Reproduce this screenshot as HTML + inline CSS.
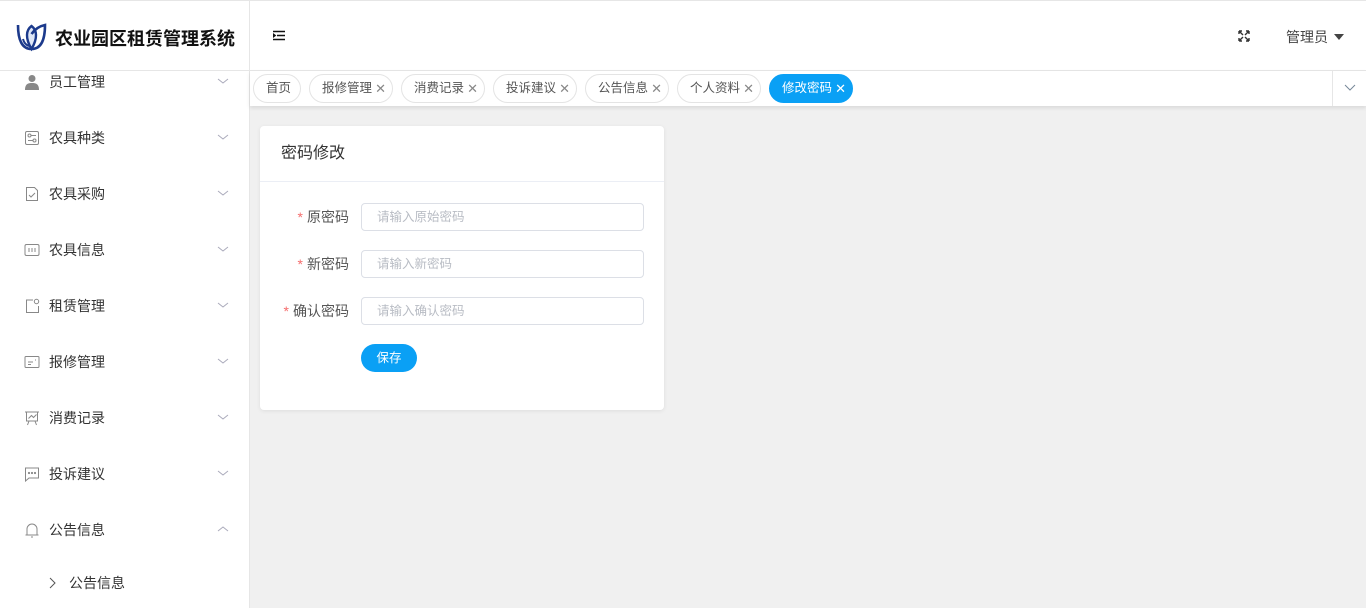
<!DOCTYPE html>
<html><head><meta charset="utf-8"><style>
*{margin:0;padding:0;box-sizing:border-box}
body{width:1366px;height:608px;overflow:hidden;background:#f0f0f0;font-family:"Liberation Sans","Noto Sans CJK SC",sans-serif;position:relative;color:#333}
.side{position:absolute;left:0;top:0;width:250px;height:608px;background:#fff;border-right:1px solid #e6e6e6}
.logo{position:absolute;left:0;top:0;width:249px;height:71px;border-bottom:1px solid #e6e6e6;border-top:1px solid #e6e6e6}
.logo span{position:absolute;left:55px;top:24px;font-size:18px;font-weight:bold;color:#111}
.mi{position:absolute;left:0;width:249px;height:20px;font-size:14px;color:#333}
.mi .ic{position:absolute;left:24px;top:2px;width:16px;height:16px}
.mi .t{position:absolute;left:49px;top:0;line-height:20px}
.mi .ch{position:absolute;left:217px;top:3px;width:12px;height:12px}
.hdr{position:absolute;left:250px;top:0;width:1116px;height:71px;background:#fff;border-bottom:1px solid #e6e6e6;border-top:1px solid #e6e6e6}
.tags{position:absolute;left:250px;top:71px;width:1116px;height:35px;background:#fff;box-shadow:0 2px 4px rgba(0,0,0,.1)}
.tag{position:absolute;top:3px;height:29px;border:1px solid #e4e4e4;border-radius:15px;font-size:12.5px;color:#555;line-height:27px;padding-left:12px}
.tag i{font-style:normal;position:absolute;right:6px;top:0;color:#888;font-size:13px}
.tag.on{background:#0aa0f5;border-color:#0aa0f5;color:#fff}
.tag.on i{color:#fff}
.card{position:absolute;left:260px;top:126px;width:404px;height:284px;background:#fff;border-radius:4px;box-shadow:0 1px 4px rgba(0,0,0,.08)}
.card h3{font-weight:normal;font-size:16px;color:#333;height:56px;line-height:55px;padding-left:21px;border-bottom:1px solid #ebeef5}
.lbl{position:absolute;right:315px;font-size:14px;color:#555;line-height:28px}
.lbl b{color:#f56c6c;font-weight:normal;margin-right:4px}
.inp{position:absolute;left:101px;width:283px;height:28px;border:1px solid #dcdfe6;border-radius:4px;font-size:12.5px;color:#b8bcc4;line-height:26px;padding-left:15px}
.btn{position:absolute;left:101px;top:218px;width:56px;height:28px;border-radius:14px;background:#0aa0f5;color:#fff;font-size:12.5px;line-height:28px;text-align:center}
</style></head><body>
<div class="side">
 <div class="logo">
  <svg style="position:absolute;left:16px;top:21px" width="31" height="30" viewBox="0 0 31 30"><path d="M15.5 4 C10 8 9 16 15.5 27 C22 16 21 8 15.5 4Z" fill="#dfe7f7" stroke="#1c3a8c" stroke-width="2.4"/><path d="M2 3 C2 18 6 27 15.5 27 C25 27 29 18 29 3 C24 4 19 7 15.5 12" fill="none" stroke="#1c3a8c" stroke-width="2.6"/><path d="M7 17 C8 21 10 23 13 24" fill="none" stroke="#1c3a8c" stroke-width="2"/></svg>
  <span>农业园区租赁管理系统</span>
 </div>
 <div class="mi" style="top:72px"><svg class="ic" viewBox="0 0 16 16"><circle cx="8" cy="4.5" r="3.5" fill="#888"/><path d="M1 16 C1 10 4 9 8 9 C12 9 15 10 15 16Z" fill="#888"/></svg><span class="t">员工管理</span><svg class="ch" viewBox="0 0 12 12"><path d="M1 4 L6 8 L11 4" fill="none" stroke="#aab" stroke-width="1"/></svg></div>
 <div class="mi" style="top:128px"><svg class="ic" viewBox="0 0 16 16" fill="none" stroke="#888"><rect x="1.5" y="1.5" width="13" height="13" rx="1.5"/><circle cx="5.5" cy="5.5" r="1.5"/><path d="M7 5.5h5M4 10.5h5"/><circle cx="10.5" cy="10.5" r="1.5"/></svg><span class="t">农具种类</span><svg class="ch" viewBox="0 0 12 12"><path d="M1 4 L6 8 L11 4" fill="none" stroke="#aab" stroke-width="1"/></svg></div>
 <div class="mi" style="top:184px"><svg class="ic" viewBox="0 0 16 16" fill="none" stroke="#888"><path d="M2.5 1.5h8l3 3v10h-11z"/><path d="M5 9l2 2 4-4"/></svg><span class="t">农具采购</span><svg class="ch" viewBox="0 0 12 12"><path d="M1 4 L6 8 L11 4" fill="none" stroke="#aab" stroke-width="1"/></svg></div>
 <div class="mi" style="top:240px"><svg class="ic" viewBox="0 0 16 16" fill="none" stroke="#888"><rect x="1" y="2.5" width="14" height="11" rx="1.5"/><path d="M5 6v4M8 6v4M11 6v4"/></svg><span class="t">农具信息</span><svg class="ch" viewBox="0 0 12 12"><path d="M1 4 L6 8 L11 4" fill="none" stroke="#aab" stroke-width="1"/></svg></div>
 <div class="mi" style="top:296px"><svg class="ic" viewBox="0 0 16 16" fill="none" stroke="#888"><path d="M9 2H2.5v12.5h12V8"/><circle cx="12.5" cy="3.5" r="2.2"/></svg><span class="t">租赁管理</span><svg class="ch" viewBox="0 0 12 12"><path d="M1 4 L6 8 L11 4" fill="none" stroke="#aab" stroke-width="1"/></svg></div>
 <div class="mi" style="top:352px"><svg class="ic" viewBox="0 0 16 16" fill="none" stroke="#888"><rect x="1" y="2.5" width="14" height="11" rx="1"/><path d="M4 8h5M4 10.5h3M11 6h1"/></svg><span class="t">报修管理</span><svg class="ch" viewBox="0 0 12 12"><path d="M1 4 L6 8 L11 4" fill="none" stroke="#aab" stroke-width="1"/></svg></div>
 <div class="mi" style="top:408px"><svg class="ic" viewBox="0 0 16 16" fill="none" stroke="#888"><path d="M1 2h14M2.5 2v9h11V2M5 11l-1.5 4M11 11l1.5 4M4.5 8.5l3-3 2 2 3-3"/></svg><span class="t">消费记录</span><svg class="ch" viewBox="0 0 12 12"><path d="M1 4 L6 8 L11 4" fill="none" stroke="#aab" stroke-width="1"/></svg></div>
 <div class="mi" style="top:464px"><svg class="ic" viewBox="0 0 16 16" fill="none" stroke="#888"><path d="M1.5 2h13v10H5l-3.5 3z"/><circle cx="5" cy="7" r=".6" fill="#888"/><circle cx="8" cy="7" r=".6" fill="#888"/><circle cx="11" cy="7" r=".6" fill="#888"/></svg><span class="t">投诉建议</span><svg class="ch" viewBox="0 0 12 12"><path d="M1 4 L6 8 L11 4" fill="none" stroke="#aab" stroke-width="1"/></svg></div>
 <div class="mi" style="top:520px"><svg class="ic" viewBox="0 0 16 16" fill="none" stroke="#888"><path d="M3 13V7a5 5 0 0 1 10 0v6M1.5 13h13M7 15h2"/></svg><span class="t">公告信息</span><svg class="ch" viewBox="0 0 12 12"><path d="M1 8 L6 4 L11 8" fill="none" stroke="#aab" stroke-width="1"/></svg></div>
 <div class="mi" style="top:573px"><svg style="position:absolute;left:47px;top:4px" width="10" height="12" viewBox="0 0 10 12"><path d="M3 1l5 5-5 5" fill="none" stroke="#555"/></svg><span class="t" style="left:69px">公告信息</span></div>
</div>
<div class="hdr">
 <svg style="position:absolute;left:23px;top:29px" width="12" height="11" viewBox="0 0 12 11"><path d="M0 1.5h12M4 5.5h8M0 9.5h12M0 4l2 1.5L0 7z" stroke="#111" stroke-width="1.6" fill="#111"/></svg>
 <svg style="position:absolute;left:988px;top:29px" width="12" height="12" viewBox="0 0 12 12" stroke="#333" stroke-width="1.4" fill="none"><path d="M1 1l4 4M11 1L7 5M1 11l4-4M11 11L7 7M1 1h3M1 1v3M11 1H8M11 1v3M1 11h3M1 11V8M11 11H8M11 11V8"/></svg>
 <span style="position:absolute;left:1036px;top:26px;font-size:14px;color:#444">管理员</span>
 <svg style="position:absolute;left:1084px;top:33px" width="10" height="6" viewBox="0 0 10 6"><path d="M0 0h10L5 6z" fill="#444"/></svg>
</div>
<div class="tags">
 <div class="tag" style="left:3px;width:48px">首页</div>
 <div class="tag" style="left:59px;width:84px">报修管理<i>✕</i></div>
 <div class="tag" style="left:151px;width:84px">消费记录<i>✕</i></div>
 <div class="tag" style="left:243px;width:84px">投诉建议<i>✕</i></div>
 <div class="tag" style="left:335px;width:84px">公告信息<i>✕</i></div>
 <div class="tag" style="left:427px;width:84px">个人资料<i>✕</i></div>
 <div class="tag on" style="left:519px;width:84px">修改密码<i>✕</i></div>
 <div style="position:absolute;left:1082px;top:0;width:34px;height:35px;border-left:1px solid #e6e6e6;background:#fff"><svg style="position:absolute;left:11px;top:13px" width="12" height="8" viewBox="0 0 12 8"><path d="M1 1l5 5 5-5" fill="none" stroke="#789" stroke-width="1"/></svg></div>
</div>
<div class="card">
 <h3>密码修改</h3>
 <div class="lbl" style="top:77px"><b>*</b>原密码</div><div class="inp" style="top:77px">请输入原始密码</div>
 <div class="lbl" style="top:124px"><b>*</b>新密码</div><div class="inp" style="top:124px">请输入新密码</div>
 <div class="lbl" style="top:171px"><b>*</b>确认密码</div><div class="inp" style="top:171px">请输入确认密码</div>
 <div class="btn">保存</div>
</div>
</body></html>
